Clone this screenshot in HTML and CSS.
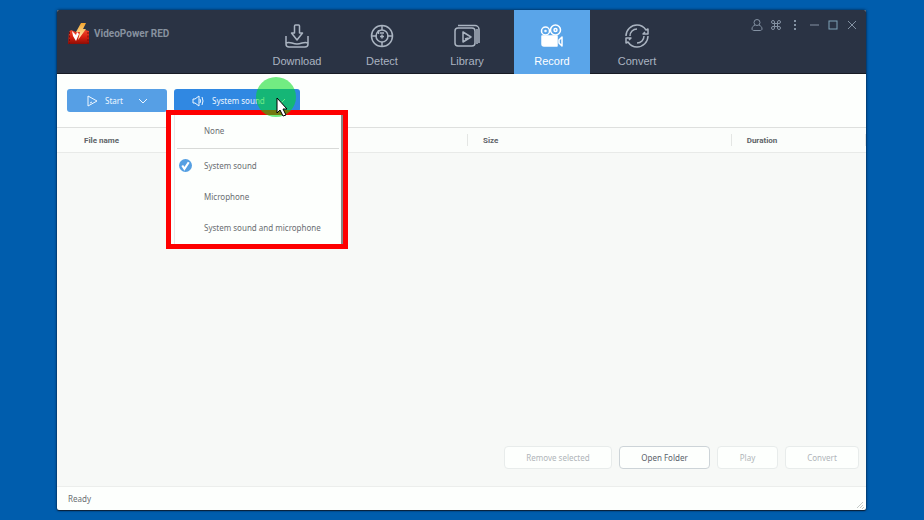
FILE: index.html
```html
<!DOCTYPE html>
<html lang="en">
<head>
<meta charset="utf-8">
<title>VideoPower RED</title>
<link rel="stylesheet" href="styles.css">
</head>
<body>
<div class="window">
  <header class="titlebar">
    <div class="brand">
      <svg class="logo" viewBox="0 0 24 24" aria-hidden="true">
        <defs><linearGradient id="red" x1="0" y1="0" x2="0" y2="1"><stop offset="0" stop-color="#ef4a2c"/><stop offset=".5" stop-color="#d9200e"/><stop offset="1" stop-color="#8d0d06"/></linearGradient>
        <linearGradient id="bolt" x1="0" y1="0" x2="0" y2="1"><stop offset="0" stop-color="#f5a52c"/><stop offset="1" stop-color="#fff3c8"/></linearGradient></defs>
        <path fill="url(#red)" d="M2 10 4 8l5 2 9-2 4 1v13H1z"/>
        <path d="M2.500 10v12M21 10v12" stroke="#7c0d08" stroke-dasharray="2 1.500"/>
        <path fill="url(#bolt)" d="M14 1h5l-3 6h3l-8 11 2-8H9z"/>
        <path fill="#fff" d="M5 9l4 4 1-3 2 2-3 7-3-5z"/>
      </svg>
      <span>VideoPower RED</span>
    </div>
    <nav class="tabs">
      <button class="tab"><svg viewBox="0 0 26 26"><path d="M2 13v8a3 3 0 0 0 3 3h16a3 3 0 0 0 3-3v-8M2 20c4-2 6 1 11 1s7-3 11-1M10.500 3q0-1 1-1h3q1 0 1 1v7h3L13 17l-5.500-7h3z"/></svg>Download</button>
      <button class="tab"><svg viewBox="0 0 26 26"><circle cx="13" cy="13" r="10.500"/><circle cx="13" cy="13" r="6"/><path d="M13 3v4M13 19v4M3 13h5M18 13h5M9.500 7v4M13 11.500v4M11 13.500h4M11 10h4"/></svg>Detect</button>
      <button class="tab"><svg viewBox="0 0 26 26"><rect x="1" y="5" width="20" height="18" rx="3"/><path d="M4 2.500h17a4 4 0 0 1 4 4V20M23 6v15M9 9v10l8-5zM11 16l3-1"/></svg>Library</button>
      <button class="tab active"><svg viewBox="0 0 26 26"><circle cx="6.500" cy="8" r="4"/><circle cx="16.500" cy="7" r="5"/><circle cx="6.500" cy="8" r=".5"/><circle cx="16.500" cy="7" r="1.500"/><path class="solid" d="M3 13h15v10H5a2 2 0 0 1-2-2z"/><path d="M20 17l3-3v9l-3-3z"/></svg>Record</button>
      <button class="tab"><svg viewBox="0 0 26 26"><path d="M2 13C2 7 7 2 13 2c4 0 7 2 9 5l2-1v5h-5l2-2M6 13c0-4 3-7 7-7M24 13c0 6-5 11-11 11-4 0-7-2-9-5l-2 1v-5h5l-2 2M20 13c0 4-3 7-7 7"/></svg>Convert</button>
    </nav>
    <div class="controls">
      <button aria-label="Account"><svg viewBox="0 0 12 12"><circle cx="6" cy="3.500" r="3"/><path d="M4 6C2 7 1 8 1 10c0 1 1 1.500 2 1.500h6c1 0 2-.5 2-1.500 0-2-1-3-3-4"/></svg></button>
      <button aria-label="Apps"><svg viewBox="0 0 12 12"><path d="M4.500 4.500h3v3h-3zM4.500 4.500H3A1.500 1.500 0 1 1 4.500 3zM7.500 4.500V3A1.500 1.500 0 1 1 9 4.500zM7.500 7.500H9A1.500 1.500 0 1 1 7.500 9zM4.500 7.500V9A1.500 1.500 0 1 1 3 7.500z"/></svg></button>
      <button aria-label="Menu"><svg viewBox="0 0 12 12"><path class="dots" d="M5 1h2v2H5zM5 5h2v2H5zM5 9h2v2H5z"/></svg></button>
      <button aria-label="Minimize"><svg viewBox="0 0 12 12"><path d="M2 6h9"/></svg></button>
      <button aria-label="Maximize"><svg viewBox="0 0 12 12"><rect class="max" x="2" y="2" width="8" height="8"/></svg></button>
      <button aria-label="Close"><svg viewBox="0 0 12 12"><path d="M2 2l8 8M10 2l-8 8"/></svg></button>
    </div>
  </header>
  <div class="toolbar">
    <button class="action start"><svg viewBox="0 0 12 12"><path d="M2 1v10l9-5zM4 8l2-1"/></svg><span>Start</span><svg class="chevron" viewBox="0 0 12 12"><path d="M2 4l4 4 4-4"/></svg></button>
    <div class="picker">
      <button class="action sound"><svg viewBox="0 0 12 12"><path d="M1 4h2l4-3v10L3 8H1zM8 4q1 2 0 4M10 2q2 4 0 8"/></svg><span>System sound</span><svg class="chevron" viewBox="0 0 12 12"><path d="M2 4l4 4 4-4"/></svg></button>
      <div class="highlight">
        <div class="menu">
          <button>None</button>
          <hr>
          <button><svg viewBox="0 0 12 12"><circle cx="6" cy="6" r="6"/><path d="M3 6l2 3 4-6"/></svg>System sound</button>
          <button>Microphone</button>
          <button>System sound and microphone</button>
        </div>
      </div>
      <div class="pulse"></div>
      <svg class="cursor" viewBox="0 0 12 20"><path d="M1 1v15l3-3 3 6 3-1-3-6h4z"/></svg>
    </div>
  </div>
  <main class="content">
    <table class="files">
      <thead><tr><th class="name">File name</th><th class="size">Size</th><th>Duration</th></tr></thead>
    </table>
    <div class="buttons">
      <button class="remove" disabled>Remove selected</button>
      <button class="open">Open Folder</button>
      <button class="play" disabled>Play</button>
      <button class="convert" disabled>Convert</button>
    </div>
  </main>
  <footer class="status"><span>Ready</span><svg class="grip" viewBox="0 0 8 8"><path d="M1 7l6-6M4 7l3-3M6 8l2-2"/></svg></footer>
</div>
</body>
</html>
```
FILE: styles.css
```css
* { box-sizing: border-box; }

body {
  margin: 0;
  min-height: 100vh;
  display: flex;
  padding: 10px 58px 10px 57px;
  background: #005dad;
  font: 8px/12px "Noto Sans", sans-serif;
  color: #6a6e72;
}

button { font: inherit; color: inherit; border: 0; padding: 0; background: none; }

svg { fill: none; stroke: currentColor; flex: none; }

.window {
  flex: 1;
  display: flex;
  flex-direction: column;
  background: #fdfffd;
  border-radius: 2px;
  box-shadow: 0 0 3px #001b38, 0 1px 1px #10243a;
}

.titlebar {
  height: 64px;
  display: flex;
  background: #2a3344;
  border-bottom: 1px solid #171c25;
  border-radius: 2px 2px 0 0;
}

.brand {
  width: 203px;
  display: flex;
  align-items: center;
  gap: 3px;
  height: 47px;
  padding-left: 10px;
  font: bold 10px/12px Roboto, sans-serif;
  color: #87919f;
}

.logo { width: 24px; height: 24px; stroke: none; }

.tabs { display: flex; gap: 9px; margin-left: -1px; }

.tab {
  width: 76px;
  height: 64px;
  display: flex;
  flex-direction: column;
  align-items: center;
  gap: 5px;
  padding-top: 13px;
  font: 11px/14px "Liberation Sans", sans-serif;
  color: #aab4c1;
}

.tab svg { width: 26px; height: 26px; stroke-width: 1.500; stroke-linejoin: round; }
.tab.active { background: #5aa5e9; color: #fff; }
.solid { fill: currentColor; }

.controls {
  margin-left: auto;
  display: flex;
  gap: 7px;
  height: 30px;
  padding-right: 8px;
  color: #8492a3;
}

.controls svg { display: block; width: 12px; height: 12px; }
.controls .dots { fill: currentColor; stroke: none; }
.controls .max { stroke: #7fa3b7; }

.toolbar {
  height: 53px;
  display: flex;
  align-items: flex-start;
  gap: 7px;
  padding: 15px 10px 0;
}

.action {
  height: 23px;
  display: flex;
  align-items: center;
  padding-left: 19px;
  border-radius: 3px;
  background: #569fe5;
  color: #eef7ff;
}

.action svg { width: 12px; height: 12px; margin-right: 7px; }
.action .chevron { margin: 0 0 0 14px; }
.start { width: 100px; }
.sound { width: 126px; background: #3088e2; padding-left: 18px; }
.sound svg { margin-right: 8px; }
.sound .chevron { margin: 0 0 0 10px; }

.picker { position: relative; }

.highlight {
  position: absolute;
  z-index: 1;
  top: 21px;
  left: -8px;
  width: 182px;
  border: 5px solid #fe0000;
  background: #fdfffd;
}

.menu {
  margin-left: 3px;
  padding-bottom: 1px;
  border-left: 1px solid #e7e9e7;
  border-right: 2px solid #868987;
}

.menu button {
  display: flex;
  align-items: center;
  width: 100%;
  height: 31px;
  padding-left: 29px;
  position: relative;
}

.menu svg { position: absolute; left: 4px; width: 13px; height: 13px; }
.menu circle { fill: #559fe2; stroke: none; }
.menu path { stroke: #fff; stroke-width: 2; }
.menu hr { margin: 2px 2px 1px; border: 0; border-top: 1px solid #d8dad8; }

.pulse {
  position: absolute;
  z-index: 2;
  top: -12px;
  left: 82px;
  width: 40px;
  height: 40px;
  border-radius: 50%;
  background: rgb(0 220 30 / 55%);
}

.cursor {
  position: absolute;
  z-index: 3;
  top: 8px;
  left: 102px;
  width: 12px;
  height: 20px;
  fill: #fff;
  stroke: #000;
}

.content {
  flex: 1;
  display: flex;
  flex-direction: column;
  justify-content: space-between;
  background: #f7f9f7;
}

.files {
  width: 100%;
  table-layout: fixed;
  border-collapse: separate;
  border-spacing: 0;
  background: #fbfdfb;
  border-top: 1px solid #dee0de;
  border-bottom: 1px solid #e8eae8;
}

.files th {
  height: 24px;
  padding: 1px 0 0 15px;
  text-align: left;
  font: bold 8px/12px Roboto, sans-serif;
  color: #606468;
  background: linear-gradient(#e4e6e4, #e4e6e4) right center / 1px 12px no-repeat;
}

.files .name { width: 50.8%; padding-left: 27px; }
.files .size { width: 32.6%; }

.buttons {
  display: flex;
  justify-content: flex-end;
  gap: 7px;
  padding: 0 7px 17px;
}

.buttons button {
  height: 23px;
  border: 1px solid #cdd4d8;
  border-radius: 4px;
  background: #fdfffd;
  color: #59616a;
}

.buttons button:disabled { border-color: #e8eceb; color: #b0b5b9; }
.buttons .remove { width: 108px; }
.buttons .open { width: 91px; }
.buttons .play { width: 61px; }
.buttons .convert { width: 74px; }

.status {
  height: 24px;
  display: flex;
  align-items: center;
  justify-content: space-between;
  padding-left: 11px;
  border-top: 1px solid #eceeec;
}

.grip { align-self: flex-end; width: 8px; height: 8px; margin: 0 2px 1px; stroke: #c5cac7; }
```
